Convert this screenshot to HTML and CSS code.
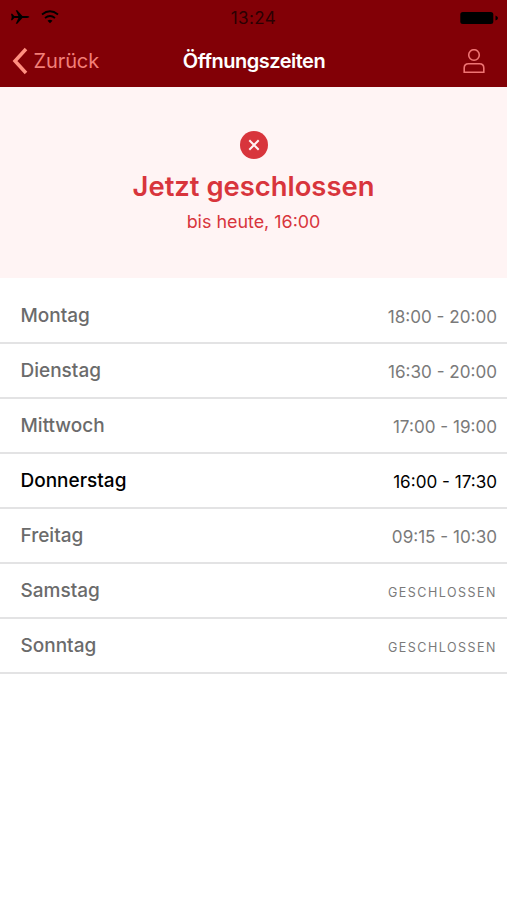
FILE: index.html
```html
<!DOCTYPE html>
<html lang="de">
<head>
<meta charset="utf-8">
<title>Öffnungszeiten</title>
<link rel="stylesheet" href="styles.css">
</head>
<body>
<header class="header">
  <div class="status">
    <div class="signals">
      <svg width="19" height="16" viewBox="0 0 20 16"><path d="M0 4.500h1.300L3.500 7h4.300L5 1h1.600L12 7h5q2 .2 2.500 1-.5.8-2.500 1h-5l-5.400 6H5l2.800-6H3.500l-2.200 2.500H0L.800 8Z"/></svg>
      <svg width="18" height="14" viewBox="0 0 18 14" fill="none" stroke="#000" stroke-width="1.800"><path d="M1 4.500q8-6.500 16 0M4 8q5-4 10 0"/><path d="M6.500 10.800 9 13.300l2.500-2.500q-2.500-2-5 0Z" fill="#000" stroke="none"/></svg>
    </div>
    <time class="clock">13:24</time>
    <svg class="battery" width="39" height="14" viewBox="0 0 39 14"><rect x=".3" y="1" width="33" height="12" rx="2.500"/><path d="M35.500 4.500q2.500 1 2.500 2.500t-2.500 2.500Z"/></svg>
  </div>
  <nav class="nav">
    <a class="back"><svg width="16" height="28" viewBox="0 0 16 28"><path d="M14 2 3 14l11 12"/></svg><span>Zurück</span></a>
    <h1 class="title">Öffnungszeiten</h1>
    <svg class="user" width="22" height="25" viewBox="0 0 22 25"><circle cx="11" cy="6" r="5.300"/><path d="M1.200 23.300v-4.300q0-4.300 4.300-4.300h11q4.300 0 4.300 4.300v4.300Z"/></svg>
  </nav>
</header>
<section class="notice">
  <svg width="28" height="28" viewBox="0 0 28 28"><circle cx="14" cy="14" r="14" fill="#d8353c"/><path d="m9.300 9.300 9.400 9.400m0-9.400-9.400 9.400" stroke="#fff3f3" stroke-width="2"/></svg>
  <h2 class="state">Jetzt geschlossen</h2>
  <p class="until">bis heute, 16:00</p>
</section>
<main class="days">
  <div class="day"><span class="name">Montag</span><span class="hours">18:00 - 20:00</span></div>
  <div class="day"><span class="name">Dienstag</span><span class="hours">16:30 - 20:00</span></div>
  <div class="day"><span class="name">Mittwoch</span><span class="hours">17:00 - 19:00</span></div>
  <div class="day today"><span class="name">Donnerstag</span><span class="hours">16:00 - 17:30</span></div>
  <div class="day"><span class="name">Freitag</span><span class="hours">09:15 - 10:30</span></div>
  <div class="day"><span class="name">Samstag</span><span class="hours closed">GESCHLOSSEN</span></div>
  <div class="day"><span class="name">Sonntag</span><span class="hours closed">GESCHLOSSEN</span></div>
</main>
</body>
</html>
```
FILE: styles.css
```css
* { box-sizing: border-box; margin: 0; }
body { min-height: 900px; background: #fff; font-family: Inter, sans-serif; }
svg { display: block; flex: none; }
.header { height: 87px; background: #820006; }
.status { display: grid; grid-template-columns: 1fr auto 1fr; align-items: center; height: 35px; padding: 0 8px 0 11px; }
.signals { display: flex; align-items: center; gap: 11px; height: 33px; align-self: start; }
.clock { margin-left: -3px; color: #2a0002; font-size: 17px; letter-spacing: .4px; }
.battery { justify-self: end; }
.nav { display: grid; grid-template-columns: 1fr auto 1fr; align-items: center; height: 52px; padding: 0 12px; }
.back { display: flex; align-items: center; gap: 5.500px; color: #f27f78; font-size: 20px; letter-spacing: -.1px; }
.back svg { fill: none; stroke: #ff8f80; stroke-width: 3.500; }
.title { padding-left: 1px; color: #fff; font-size: 20px; font-weight: 600; letter-spacing: -.5px; }
.user { justify-self: end; margin-right: 10px; fill: none; stroke: #ef7474; stroke-width: 1.600; }
.notice { display: flex; flex-direction: column; align-items: center; height: 191px; padding-top: 44px; background: #fff4f4; color: #d8353c; }
.state { margin-top: 10px; font-size: 27.400px; line-height: 34px; font-weight: 600; }
.until { margin-top: 6px; font-size: 17.900px; line-height: 25px; }
.days { padding-top: 11px; }
.day { display: flex; align-items: center; justify-content: space-between; height: 55px; padding: 0 10px 0 20.500px; border-bottom: 2px solid #e3e3e4; color: #6b6b6b; }
.name { font-size: 19px; font-weight: 500; }
.hours { padding-top: 1px; color: #7a7a7a; font-size: 17.100px; }
.closed { padding-top: 4px; font-size: 12.500px; letter-spacing: 1.500px; }
.today, .today .hours { color: #000; }
```
